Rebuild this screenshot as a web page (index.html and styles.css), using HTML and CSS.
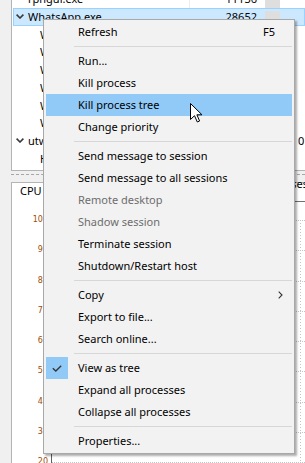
FILE: index.html
```html
<!DOCTYPE html>
<html>
<head>
<meta charset="utf-8">
<link rel="stylesheet" href="styles.css">
</head>
<body>
<div class="window">
  <div class="tree">
    <div class="row"><span class="name"><span class="tw"></span>rpngui.exe</span><span class="pid">11136</span><span></span><span class="bar"></span><span></span></div>
    <div class="row sel"><span class="name"><span class="tw"><svg width="8" height="5" viewBox="0 0 8 5"><path d="M0.6 0.6 L4 4 L7.4 0.6" fill="none" stroke="#3a3a3a" stroke-width="1.6"/></svg></span>WhatsApp.exe</span><span class="pid">28652</span><span></span><span class="bar"></span><span></span></div>
    <div class="row"><span class="name child">WhatsApp.exe</span><span class="pid">28660</span><span></span><span></span><span></span></div>
    <div class="row"><span class="name child">WhatsApp.exe</span><span class="pid">28704</span><span></span><span></span><span></span></div>
    <div class="row"><span class="name child">WhatsApp.exe</span><span class="pid">28712</span><span></span><span></span><span></span></div>
    <div class="row"><span class="name child">WhatsApp.exe</span><span class="pid">28760</span><span></span><span></span><span></span></div>
    <div class="row"><span class="name child">WhatsApp.exe</span><span class="pid">28812</span><span></span><span></span><span></span></div>
    <div class="row"><span class="name child">WhatsApp.exe</span><span class="pid">28840</span><span></span><span></span><span></span></div>
    <div class="row"><span class="name"><span class="tw"><svg width="8" height="5" viewBox="0 0 8 5"><path d="M0.6 0.6 L4 4 L7.4 0.6" fill="none" stroke="#3a3a3a" stroke-width="1.6"/></svg></span>utweb.exe</span><span class="pid">9420</span><span></span><span></span><span class="extra">0</span></div>
    <div class="row"><span class="name child">Helper.exe</span><span class="pid">9476</span><span></span><span></span><span></span></div>
  </div>
  <div class="splitter"><div class="dash"></div></div>
  <div class="graph">
    <div class="ghead"><span class="cpu">CPU</span><span class="plabel">Processes</span></div>
    <div class="chart">
      <div class="axis">
        <div class="tick">100</div><div class="tick">90</div><div class="tick">80</div>
        <div class="tick">70</div><div class="tick">60</div><div class="tick">50</div>
        <div class="tick">40</div><div class="tick">30</div><div class="tick">20</div>
      </div>
      <div class="plot">
        <div class="gl"></div><div class="gl"></div><div class="gl"></div>
        <div class="gl"></div><div class="gl"></div><div class="gl"></div>
        <div class="gl"></div><div class="gl"></div><div class="gl"></div>
      </div>
    </div>
  </div>

  <div class="menu">
    <div class="item"><span class="ico"></span><span class="lbl">Refresh</span><span class="acc">F5</span></div>
    <div class="sep"></div>
    <div class="item"><span class="ico"></span><span class="lbl">Run...</span></div>
    <div class="item"><span class="ico"></span><span class="lbl">Kill process</span></div>
    <div class="item hl"><span class="ico"></span><span class="lbl">Kill process tree</span></div>
    <div class="item"><span class="ico"></span><span class="lbl">Change priority</span></div>
    <div class="sep"></div>
    <div class="item"><span class="ico"></span><span class="lbl">Send message to session</span></div>
    <div class="item"><span class="ico"></span><span class="lbl">Send message to all sessions</span></div>
    <div class="item dis"><span class="ico"></span><span class="lbl">Remote desktop</span></div>
    <div class="item dis"><span class="ico"></span><span class="lbl">Shadow session</span></div>
    <div class="item"><span class="ico"></span><span class="lbl">Terminate session</span></div>
    <div class="item"><span class="ico"></span><span class="lbl">Shutdown/Restart host</span></div>
    <div class="sep"></div>
    <div class="item"><span class="ico"></span><span class="lbl">Copy</span><span class="sub"><svg width="5" height="8" viewBox="0 0 5 8"><path d="M0.7 0.7 L4 4 L0.7 7.3" fill="none" stroke="#333" stroke-width="1.1"/></svg></span></div>
    <div class="item"><span class="ico"></span><span class="lbl">Export to file...</span></div>
    <div class="item"><span class="ico"></span><span class="lbl">Search online...</span></div>
    <div class="sep"></div>
    <div class="item"><span class="ico on"><svg width="10" height="7" viewBox="0 0 10 7"><path d="M0.8 3.2 L3.8 6 L9.2 0.7" fill="none" stroke="#333" stroke-width="1.3"/></svg></span><span class="lbl">View as tree</span></div>
    <div class="item"><span class="ico"></span><span class="lbl">Expand all processes</span></div>
    <div class="item"><span class="ico"></span><span class="lbl">Collapse all processes</span></div>
    <div class="sep"></div>
    <div class="item"><span class="ico"></span><span class="lbl">Properties...</span></div>
  </div>

  <svg class="cursor" width="13" height="20" viewBox="0 0 13 20"><path d="M0.5 0.5 V16.5 L4.5 12.7 L7.3 19 L9.6 18 L6.9 11.8 H12 Z" fill="#fff" stroke="#000" stroke-width="1" stroke-linejoin="miter"/></svg>
</div>
</body>
</html>
```

FILE: styles.css
```css
* { box-sizing: border-box; }
html, body { margin: 0; padding: 0; }
body {
  background: #f0f0f0;
  font-family: "Noto Sans", "Open Sans", sans-serif;
  font-size: 11px;
  color: #000;
  width: 305px;
  height: 463px;
  overflow: hidden;
}
.window { position: relative; width: 305px; height: 463px; overflow: hidden; }

/* process tree */
.tree {
  margin: -11px 0 0 11px;
  height: 182px;
  border: 1px solid #b4b4b4;
  border-right: 0;
  background: #fff;
  overflow: hidden;
}
.row {
  height: 17.75px;
  margin-left: 1px;
  display: grid;
  grid-template-columns: 177px 68px 7px 15px 1fr;
  align-items: center;
  line-height: 17.75px;
  white-space: nowrap;
}
.row.sel { background: #cce8ff; box-shadow: inset 0 0 0 1px #99d1ff; }
.name {
  display: flex;
  align-items: center;
  height: 100%;
  padding-left: 3px;
  border-right: 1px solid #ececec;
  overflow: hidden;
}
.row.sel .name { border-right-color: transparent; }
.name.child { padding-left: 27px; }
.tw { width: 8px; margin-right: 4px; display: flex; align-items: center; flex: none; }
.pid { text-align: right; padding-right: 1px; }
.bar { align-self: start; margin-top: 3px; height: 14.75px; background: #dedede; }
.extra { padding-left: 18px; }

.splitter { height: 11px; margin-left: 11px; padding-top: 3px; }
.dash { border-top: 1px dashed #a6a6a6; }

/* graph panel */
.graph {
  margin-left: 11px;
  height: 281px;
  border-top: 1px solid #b4b4b4;
  border-left: 1px solid #b4b4b4;
  background: #fff;
}
.ghead {
  height: 37px;
  display: flex;
  align-items: flex-start;
  padding-left: 8px;
  line-height: 14px;
}
.cpu { padding-top: 1px; }
.plabel {
  margin-left: auto;
  margin-right: -3px;
  margin-top: -6px;
  height: 25px;
  border-bottom: 1px solid #707070;
  white-space: nowrap;
}
.chart { display: grid; grid-template-columns: 39px 1fr; }
.axis { display: flex; flex-direction: column; }
.tick {
  height: 30.25px;
  text-align: right;
  padding-right: 3px;
  font-family: "DejaVu Sans", sans-serif;
  font-size: 8px;
  line-height: 10px;
  margin-top: -5px;
  margin-bottom: 5px;
  color: #a04d08;
}
.plot {
  border-left: 1px solid #606060;
  display: flex;
  flex-direction: column;
  background-image: repeating-linear-gradient(to bottom, #c4c4c4 0 1px, transparent 1px 3px);
  background-size: 1px 100%;
  background-position: 248px 0;
  background-repeat: no-repeat;
}
.gl {
  height: 30.25px;
  flex: none;
  border-top: 1px dotted #c4c4c4;
}

/* context menu */
.menu {
  position: absolute;
  left: 43px;
  top: 19px;
  width: 252px;
  background: #f2f2f2;
  border: 1px solid #a8a8a8;
  padding: 1px 2px;
  box-shadow: 2px 2px 2px rgba(0, 0, 0, 0.32);
}
.item {
  height: 22px;
  display: flex;
  align-items: center;
  white-space: nowrap;
  padding-bottom: 2px;
}
.item.hl { background: #91c9f7; }
.item.dis { color: #6d6d6d; }
.ico {
  width: 22px;
  height: 22px;
  flex: none;
  margin-right: 10px;
  margin-bottom: -2px;
  display: flex;
  align-items: center;
  justify-content: center;
}
.ico.on { background: #91c9f7; }
.lbl { flex: 1; }
.acc { margin-right: 17px; }
.sub { margin-right: 9px; display: flex; margin-bottom: -2px; }
.sep { height: 7px; padding-top: 3px; }
.sep::before {
  content: "";
  display: block;
  height: 1px;
  margin-left: 28px;
  background: #d7d7d7;
}

.cursor { position: absolute; left: 190px; top: 103px; }
```
